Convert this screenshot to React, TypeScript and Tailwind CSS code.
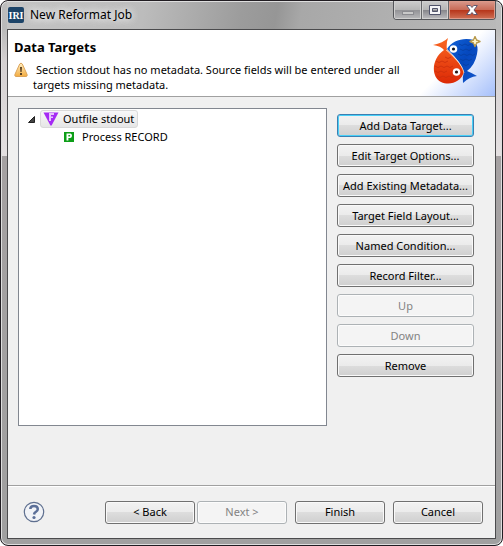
import { clsx } from "clsx";
import type { ReactNode } from "react";

type DialogButtonProps = {
  children: ReactNode;
  className?: string;
  disabled?: boolean;
  focused?: boolean;
};

const DialogButton = ({ children, className, disabled, focused }: DialogButtonProps) => (
  <button
    type="button"
    disabled={disabled}
    className={clsx(
      "flex h-[23px] items-center justify-center whitespace-nowrap rounded-[3px] border text-[11px] leading-[16px]",
      disabled && "border-[#adb2b5] bg-[#f4f4f4] text-[#838383] shadow-[inset_0_0_0_1px_#fcfcfc]",
      !disabled &&
        "bg-[linear-gradient(#f2f2f2_0%,#ebebeb_50%,#dddddd_50%,#cfcfcf_100%)] text-black",
      !disabled && !focused && "border-[#707070] shadow-[inset_0_0_0_1px_#f9f9f9]",
      focused && "border-[#3c7fb1] shadow-[inset_0_0_0_1px_#48d0f8]",
      className,
    )}
  >
    {children}
  </button>
);

const WarningIcon = () => (
  <svg className="h-[16px] w-[14px] shrink-0" viewBox="0 0 14 16" aria-hidden="true">
    <defs>
      <linearGradient id="warning" x1="0" y1="0" x2="0" y2="1">
        <stop offset="0" stopColor="#fff0c4" />
        <stop offset="1" stopColor="#f3ac40" />
      </linearGradient>
    </defs>
    <path
      d="M5.7 2Q7 .2 8.3 2l4.8 10.5Q13.6 14.5 12 14.5H2Q.4 14.5.9 12.5Z"
      fill="url(#warning)"
      stroke="#dca45a"
      strokeWidth="1"
    />
    <path d="M6 5h2l-.4 5H6.4ZM6 11h2v2H6Z" fill="#594125" />
  </svg>
);

const TargetIcon = () => (
  <svg className="h-[14px] w-[16px] shrink-0" viewBox="0 0 16 14" aria-hidden="true">
    <path d="M.5.5h15L8.6 13.5H7.4Z" fill="#a52af4" />
    <path d="M6 1h5v2H8v1.5h2V6H8v3H6Z" fill="#e5c2fb" />
  </svg>
);

const RecordIcon = () => (
  <svg className="size-[10px] shrink-0" viewBox="0 0 10 10" aria-hidden="true">
    <path d="M0 0h10v10H0Z" fill="#0d9e18" />
    <path
      fillRule="evenodd"
      d="M2.5 1.5h4Q8 2 8 3.8T6.3 6H4.4v2.5H2.5ZM4.4 3v1.6h1.2q.6-.2.6-.8T5.6 3Z"
      fill="#fff"
    />
  </svg>
);

const FishLogo = () => (
  <svg className="h-[49px] w-[48px]" viewBox="0 0 48 49" aria-hidden="true">
    <defs>
      <linearGradient id="blueFish" x1="0" y1="0" x2="1" y2="1">
        <stop offset="0" stopColor="#1264d8" />
        <stop offset=".5" stopColor="#0548be" />
        <stop offset="1" stopColor="#1456cb" />
      </linearGradient>
      <linearGradient id="redFish" x1="0" y1="0" x2="0" y2="1">
        <stop offset="0" stopColor="#fa6722" />
        <stop offset="1" stopColor="#dc2906" />
      </linearGradient>
    </defs>
    <path
      d="M14 13C19 4 31 1 41 4Q46 10 44 18Q42 29 34 35Q39 37 44 40Q36 41 30 47Q29 41 31 36Q29 27 14 13Z"
      fill="url(#blueFish)"
    />
    <path
      d="M11 14Q8 10 0 9Q10 7 15 2Q13 8 14 14C20 20 28 28 31 36C28 46 17 50 8 46C-2 41-2 23 11 14Z"
      fill="url(#redFish)"
    />
    <path d="M13 14C20 20 29 28 31 37" fill="none" stroke="#ffe1b8" strokeWidth=".7" />
    <path
      d="M3 25q3 3 6 0q3 3 6 0M2 30q3 3 6 0q3 3 6 0q3 3 6 0M2 35q3 3 6 0q3 3 6 0M4 40q3 3 6 0q3 3 6 0q3 3 6 0M12 21q3 3 6 0"
      fill="none"
      stroke="#c92f0c"
      strokeWidth=".8"
    />
    <path
      d="M26 8q3 3 6 0q3 3 6 0M27 13q3 3 6 0q3 3 6 0M25 18q3 3 6 0q3 3 6 0q3 3 5 0M27 23q3 3 6 0q3 3 6 0M30 28q3 3 6 0"
      fill="none"
      stroke="#063da0"
      strokeWidth=".8"
    />
    <circle cx="20.5" cy="13" r="3.8" fill="#fff" />
    <circle cx="20.5" cy="13" r="1.6" fill="#101722" />
    <circle cx="23.5" cy="36" r="3.8" fill="#fff" />
    <circle cx="23.5" cy="36" r="1.6" fill="#291712" />
    <path
      d="m42 .5 1.5 3.5L47 5.5 43.500 7 42 10.500 40.500 7 37 5.500 40.500 4Z"
      fill="#fff5c8"
      stroke="#b7994c"
      strokeWidth="1.4"
      strokeLinejoin="round"
    />
    <path d="M42 3v5M39.5 5.5h5" stroke="#fff5c8" strokeWidth="1" />
  </svg>
);

const TitleBar = () => (
  <div className="flex h-[28px] shrink-0 items-start justify-between bg-[linear-gradient(100deg,#c4c4c4_0%,#bcbcbc_28%,#9c9c9c_48%,#969696_55%,#a8a8a8_60%,#b9b9b9_100%)] shadow-[inset_0_1px_0_#dedede]">
    <div className="flex items-center pl-px pt-[6px]">
      <span
        className="flex size-4 items-center justify-center rounded-[2px] bg-[#1d4468] font-['Liberation_Serif',serif] text-[10px] font-bold text-white"
        aria-hidden="true"
      >
        IRI
      </span>
      <h1 className="ml-[6px] text-[12px] leading-[16px] [text-shadow:0_0_8px_#fff,0_0_8px_#fff]">
        New Reformat Job
      </h1>
    </div>
    <div className="flex h-[19px] w-[103px] overflow-hidden rounded-b-[4px] border border-t-0 border-[#55565a]">
      <button
        type="button"
        aria-label="Minimize"
        className="flex w-[28px] items-center justify-center border-r border-[#66676a] bg-[linear-gradient(#cccccc_0%,#b6b6b6_48%,#929296_50%,#b9b9bb_100%)] shadow-[inset_0_0_0_1px_#d0d0d0]"
      >
        <svg className="mt-[6px] h-[5px] w-[12px]" viewBox="0 0 12 5">
          <rect x=".5" y=".5" width="11" height="3" fill="#c9c9c9" stroke="#8b8b90" />
        </svg>
      </button>
      <button
        type="button"
        aria-label="Maximize"
        className="flex w-[27px] items-center justify-center border-r border-[#66676a] bg-[linear-gradient(#cccccc_0%,#b6b6b6_48%,#85858a_50%,#bdbdc0_100%)] shadow-[inset_0_0_0_1px_#d0d0d0]"
      >
        <svg className="h-[10px] w-[12px]" viewBox="0 0 12 10">
          <path
            fillRule="evenodd"
            d="M.5.5h11v9H.5ZM3.5 3.5v3h5v-3Z"
            fill="#f5f5f7"
            stroke="#50536a"
          />
        </svg>
      </button>
      <button
        type="button"
        aria-label="Close"
        className="flex flex-1 items-center justify-center bg-[linear-gradient(#d99a8d_0%,#c86b57_48%,#b63419_50%,#cf7156_100%)] shadow-[inset_0_0_0_1px_#dc9a8a]"
      >
        <svg className="h-[10px] w-[12px]" viewBox="0 0 12 10">
          <path
            d="M.7.5h3.6L6 2.5 7.7.5h3.6L8 5l3.3 4.5H7.7L6 7.5l-1.7 2H.7L4 5Z"
            fill="#fff"
            stroke="#55506a"
            strokeWidth=".9"
          />
        </svg>
      </button>
    </div>
  </div>
);

const Banner = () => (
  <header className="flex min-h-[67px] shrink-0 justify-between border-b border-[#a0a0a0] bg-white">
    <div className="min-w-0 pl-[6px] pt-[9px]">
      <h2 className="text-[13px] font-bold leading-[17px]">Data Targets</h2>
      <div className="mt-[6px] flex">
        <WarningIcon />
        <p className="pl-[5px] indent-[3px] text-[11px] leading-[15px]">
          Section stdout has no metadata. Source fields will be entered under all
          <br />
          targets missing metadata.
        </p>
      </div>
    </div>
    <div className="flex w-[75px] shrink-0 items-start bg-[linear-gradient(135deg,#ffffff_45%,#a6c0fb_100%)] pl-[13px] pt-[6px]">
      <FishLogo />
    </div>
  </header>
);

const TargetTree = () => (
  <div
    role="tree"
    aria-label="Data targets"
    className="min-h-[318px] flex-1 border border-[#828790] bg-white pl-[9px] pt-px text-[11px] leading-[16px]"
  >
    <div role="treeitem" aria-expanded="true">
      <div className="flex h-[18px] items-center">
        <svg className="mr-[5px] size-[7px]" viewBox="0 0 7 7" aria-hidden="true">
          <path d="M6.5.5v6h-6Z" fill="#444" stroke="#222" strokeLinejoin="round" />
        </svg>
        <div className="flex h-[18px] items-center rounded-[3px] border border-[#d9d9d9] bg-linear-to-b from-[#f8f8f8] to-[#e6e6e6] pl-[2px] pr-[3px]">
          <TargetIcon />
          <span className="ml-[4px]">Outfile stdout</span>
        </div>
      </div>
      <div role="group">
        <div role="treeitem" className="flex h-[18px] items-center pl-[36px]">
          <RecordIcon />
          <span className="ml-[8px]">Process RECORD</span>
        </div>
      </div>
    </div>
  </div>
);

const Actions = () => (
  <div className="flex w-[137px] shrink-0 flex-col gap-[7px] pt-[6px]">
    <DialogButton focused>Add Data Target...</DialogButton>
    <DialogButton>Edit Target Options...</DialogButton>
    <DialogButton>Add Existing Metadata...</DialogButton>
    <DialogButton>Target Field Layout...</DialogButton>
    <DialogButton>Named Condition...</DialogButton>
    <DialogButton>Record Filter...</DialogButton>
    <DialogButton disabled>Up</DialogButton>
    <DialogButton disabled>Down</DialogButton>
    <DialogButton>Remove</DialogButton>
  </div>
);

const Footer = () => (
  <footer className="flex h-[53px] shrink-0 items-center border-t border-[#a0a0a0] px-[12px] shadow-[inset_0_1px_0_#fff]">
    <button type="button" aria-label="Help" className="mr-auto pl-[3px]">
      <svg className="size-[22px]" viewBox="0 0 22 22" aria-hidden="true">
        <circle cx="11" cy="11" r="9.7" fill="#f1f3f7" stroke="#5e6f8f" strokeWidth="1.2" />
        <path
          d="M7.3 8.1Q7.3 4.9 11 4.9t3.8 3.1q0 1.7-1.8 2.8T11 13.5"
          fill="none"
          stroke="#5b6f98"
          strokeWidth="2.5"
        />
        <circle cx="11" cy="16.5" r="1.6" fill="#5b6f98" />
      </svg>
    </button>
    <div className="flex gap-[8px]">
      <div className="flex gap-[2px]">
        <DialogButton className="w-[90px]">&lt; Back</DialogButton>
        <DialogButton className="w-[90px]" disabled>
          Next &gt;
        </DialogButton>
      </div>
      <DialogButton className="w-[90px]">Finish</DialogButton>
      <DialogButton className="w-[90px]">Cancel</DialogButton>
    </div>
  </footer>
);

const App = () => (
  <div className="bg-white font-['Noto_Sans','Open_Sans',sans-serif] text-black">
    <div className="flex min-h-screen flex-col rounded-[8px] border border-[#211d22] bg-[linear-gradient(#bdbdbd_0,#bababa_28px,#d4d0d1_60px,#e4e0e1_155px,#a5a1a2_155px,#a0a0a0_100%)] px-[6px] pb-[6px] shadow-[inset_0_0_0_1px_#dedede]">
      <TitleBar />
      <main className="flex flex-1 flex-col border border-[#4b4b4d] bg-[#f0f0f0]">
        <Banner />
        <div className="flex flex-1 gap-[10px] pb-[59px] pl-[10px] pr-[21px] pt-[11px]">
          <TargetTree />
          <Actions />
        </div>
        <Footer />
      </main>
    </div>
  </div>
);

export default App;
